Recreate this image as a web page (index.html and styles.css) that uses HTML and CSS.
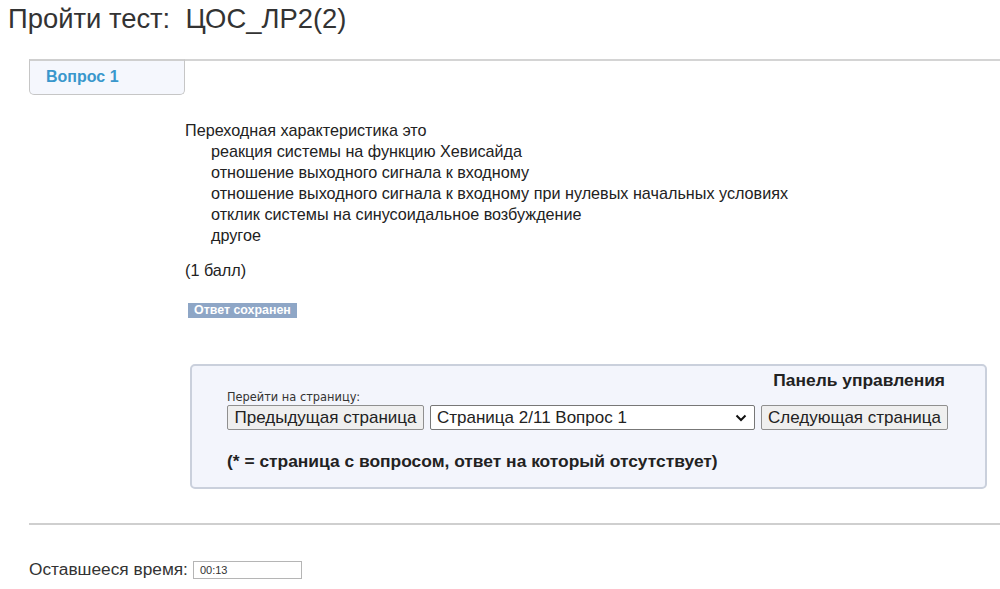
FILE: index.html
```html
<!DOCTYPE html>
<html>
    <head>
        <meta charset="utf-8">
        <title>Пройти тест</title>
        <link rel="stylesheet" href="styles.css">
    </head>
    <body>
        <h1 class="title">Пройти тест:&nbsp; ЦОС_ЛР2(2)</h1>
        <div class="tabs">
            <div class="tab">Вопрос 1</div>
            <div class="tabline"></div>
        </div>
        <div class="question">
            <div class="qtext">Переходная характеристика это</div>
            <ul class="answers">
                <li>реакция системы на функцию Хевисайда</li>
                <li>отношение выходного сигнала к входному</li>
                <li>отношение выходного сигнала к входному при нулевых начальных условиях</li>
                <li>отклик системы на синусоидальное возбуждение</li>
                <li>другое</li>
            </ul>
            <div class="points">(1 балл)</div>
            <div class="saved">Ответ сохранен</div>
        </div>
        <div class="panel">
            <div class="panel-title">Панель управления</div>
            <div class="goto">Перейти на страницу:</div>
            <div class="nav">
                <button class="btn btn-prev">Предыдущая страница</button>
                <div class="select">
                    <span>Страница 2/11 Вопрос 1</span>
                    <svg width="12" height="8" viewBox="0 0 12 8"><path d="M1.5 1.5 L6 6 L10.5 1.5" fill="none" stroke="#111" stroke-width="2"/></svg>
                </div>
                <button class="btn btn-next">Следующая страница</button>
            </div>
            <div class="note">(* = страница с вопросом, ответ на который отсутствует)</div>
        </div>
        <hr class="sep">
        <div class="timer">
            Оставшееся время:
            <span class="time">00:13</span>
        </div>
    </body>
</html>
```

FILE: styles.css
```css
*{
    padding: 0;
    margin: 0;
    box-sizing: border-box;
}
body {
    font-family: "Liberation Sans", Arial, sans-serif;
    color: #222;
    background: #fff;
    width: 1000px;
    overflow: hidden;
}
.title {
    font-weight: normal;
    font-size: 27.4px;
    line-height: 30px;
    color: #333;
    padding: 4px 0 0 8px;
    height: 59px;
}
.tabs {
    display: flex;
    margin-left: 29px;
}
.tab {
    width: 156px;
    height: 36px;
    border: 1px solid #c6c6c6;
    border-top: 2px solid #cfcfcf;
    border-radius: 0 0 5px 5px;
    background: #f5f7fd;
    color: #3a97cc;
    font-weight: bold;
    font-size: 16px;
    line-height: 32px;
    padding-left: 16px;
}
.tabline {
    flex: 1;
    border-top: 2px solid #d4d4d4;
}
.question {
    margin-left: 185px;
    margin-top: 25px;
    font-size: 16.2px;
    line-height: 21px;
}
.answers {
    list-style: none;
    padding-left: 26px;
}
.points {
    margin-top: 14px;
}
.saved {
    width: fit-content;
    margin-top: 22px;
    margin-left: 3px;
    background: #8ea6c6;
    color: #fff;
    font-size: 12.4px;
    font-weight: bold;
    line-height: 15px;
    padding: 0 6px;
}
.panel {
    margin: 46px 0 0 190px;
    width: 797px;
    height: 125px;
    background: #f3f5fc;
    border: 2px solid #cad0dc;
    border-radius: 5px;
    padding: 4px 0 0 35px;
}
.panel-title {
    text-align: right;
    font-weight: bold;
    font-size: 17.4px;
    line-height: 20px;
    padding-right: 40px;
}
.goto {
    font-family: "DejaVu Sans", Verdana, sans-serif;
    font-size: 11.4px;
    line-height: 13px;
    color: #333;
    margin-top: 1px;
}
.nav {
    display: flex;
    height: 25px;
    margin-top: 1px;
}
.btn {
    font-family: "Liberation Sans", Arial, sans-serif;
    font-size: 17px;
    color: #222;
    background: #efefef;
    border: 1px solid #8f8f8f;
    border-radius: 2px;
    height: 25px;
}
.btn-prev {
    width: 197px;
}
.btn-next {
    width: 187px;
}
.select {
    width: 325px;
    margin: 0 6px;
    border: 1px solid #777;
    border-radius: 2px;
    background: #fff;
    font-size: 17px;
    display: flex;
    align-items: center;
    justify-content: space-between;
    padding: 0 7px 0 6px;
}
.note {
    font-weight: bold;
    font-size: 17.4px;
    line-height: 20px;
    margin-top: 21px;
}
.sep {
    margin: 34px 0 0 29px;
    border: 0;
    border-top: 2px solid #cfcfcf;
}
.timer {
    margin: 34px 0 0 29px;
    font-size: 17.3px;
    color: #333;
    display: flex;
    align-items: center;
    gap: 5px;
}
.time {
    display: inline-block;
    width: 109px;
    height: 18px;
    border: 1px solid #b5b5b5;
    font-size: 11px;
    line-height: 16px;
    padding-left: 6px;
}
```
